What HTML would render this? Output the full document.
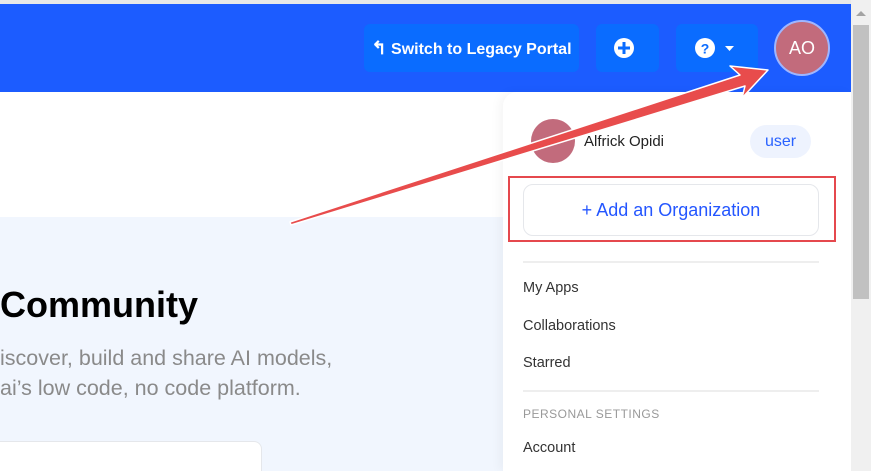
<!DOCTYPE html><html><head><style>
html,body{margin:0;width:871px;height:471px;overflow:hidden;background:#fff;font-family:"Liberation Sans",sans-serif;position:relative}
.a{position:absolute}
</style></head><body>
<div class="a" style="left:0;top:0;width:851px;height:4px;background:#e8e8e8"></div>
<div class="a" style="left:0;top:4px;width:851px;height:88px;background:#1c5cff"></div>
<div class="a" style="left:364px;top:24px;width:215px;height:48px;background:#0a6cff;border-radius:6px;color:#fff;font-weight:bold;font-size:16px;line-height:48px;text-align:center;white-space:nowrap"><span style="font-size:18px">↰</span> Switch to Legacy Portal</div>
<div class="a" style="left:596px;top:24px;width:63px;height:48px;background:#0a6cff;border-radius:6px"><svg width="63" height="48"><circle cx="28" cy="24" r="10" fill="#fff"/><path d="M28 18v12M22 24h12" stroke="#0a6cff" stroke-width="3"/></svg></div>
<div class="a" style="left:676px;top:24px;width:82px;height:48px;background:#0a6cff;border-radius:6px"><svg width="82" height="48"><circle cx="29" cy="24" r="10" fill="#fff"/><text x="29" y="29.5" font-size="14" font-weight="bold" fill="#0a6cff" text-anchor="middle" font-family="Liberation Sans">?</text><path d="M49 22h9l-4.5 5z" fill="#fff"/></svg></div>
<div class="a" style="left:774px;top:20px;width:56px;height:56px;border-radius:50%;background:#c26b7c;border:2px solid #9fb6ff;box-sizing:border-box;color:#fff;font-size:18px;line-height:52px;text-align:center">AO</div>
<div class="a" style="left:0;top:217px;width:503px;height:254px;background:#f1f6fe"></div>
<div class="a" style="left:0;top:284px;font-size:36px;font-weight:bold;color:#000">Community</div>
<div class="a" style="left:0;top:343px;font-size:21.5px;color:#8a8a8a;line-height:30px;white-space:nowrap">iscover, build and share AI models,<br>ai’s low code, no code platform.</div>
<div class="a" style="left:-10px;top:441px;width:270px;height:40px;background:#fff;border:1px solid #e5e7eb;border-radius:8px"></div>
<div class="a" style="left:503px;top:92px;width:348px;height:379px;background:#fff;border-top-left-radius:14px;box-shadow:-4px 0 10px rgba(0,0,0,0.04)"></div>
<div class="a" style="left:531px;top:119px;width:44px;height:44px;border-radius:50%;background:#c26b7c"></div>
<div class="a" style="left:584px;top:133px;font-size:15px;color:#222">Alfrick Opidi</div>
<div class="a" style="left:750px;top:125px;width:61px;height:33px;border-radius:17px;background:#eef3fe;color:#2962ff;font-size:16px;line-height:33px;text-align:center">user</div>
<div class="a" style="left:508px;top:176px;width:328px;height:66px;border:2px solid #e5484d;box-sizing:border-box"></div>
<div class="a" style="left:523px;top:184px;width:296px;height:52px;border:1px solid #e5e7eb;border-radius:10px;box-sizing:border-box;color:#2456ff;font-size:18px;line-height:50px;text-align:center">+ Add an Organization</div>
<div class="a" style="left:523px;top:261px;width:296px;height:2px;background:#eee"></div>
<div class="a" style="left:523px;top:280px;font-size:14.5px;color:#333">My Apps</div>
<div class="a" style="left:523px;top:318px;font-size:14.5px;color:#333">Collaborations</div>
<div class="a" style="left:523px;top:355px;font-size:14.5px;color:#333">Starred</div>
<div class="a" style="left:523px;top:390px;width:296px;height:2px;background:#eee"></div>
<div class="a" style="left:523px;top:407px;font-size:12px;color:#999;letter-spacing:.5px">PERSONAL SETTINGS</div>
<div class="a" style="left:523px;top:440px;font-size:14.5px;color:#333">Account</div>
<div class="a" style="left:851px;top:0;width:20px;height:471px;background:#f0f0f0"></div>
<div class="a" style="left:853px;top:25px;width:16px;height:274px;background:#c1c1c1"></div>
<svg class="a" style="left:851px;top:6px" width="20" height="14"><path d="M5 10h10l-5-5z" fill="#a3a3a3"/></svg>
<svg class="a" style="left:0;top:0" width="871" height="471"><polygon points="291,225 745,86 742,98 768,70 730,66 740,75 290,222" fill="#e84c4c" stroke="#fff" stroke-width="1.5" stroke-linejoin="round"/></svg>
</body></html>
